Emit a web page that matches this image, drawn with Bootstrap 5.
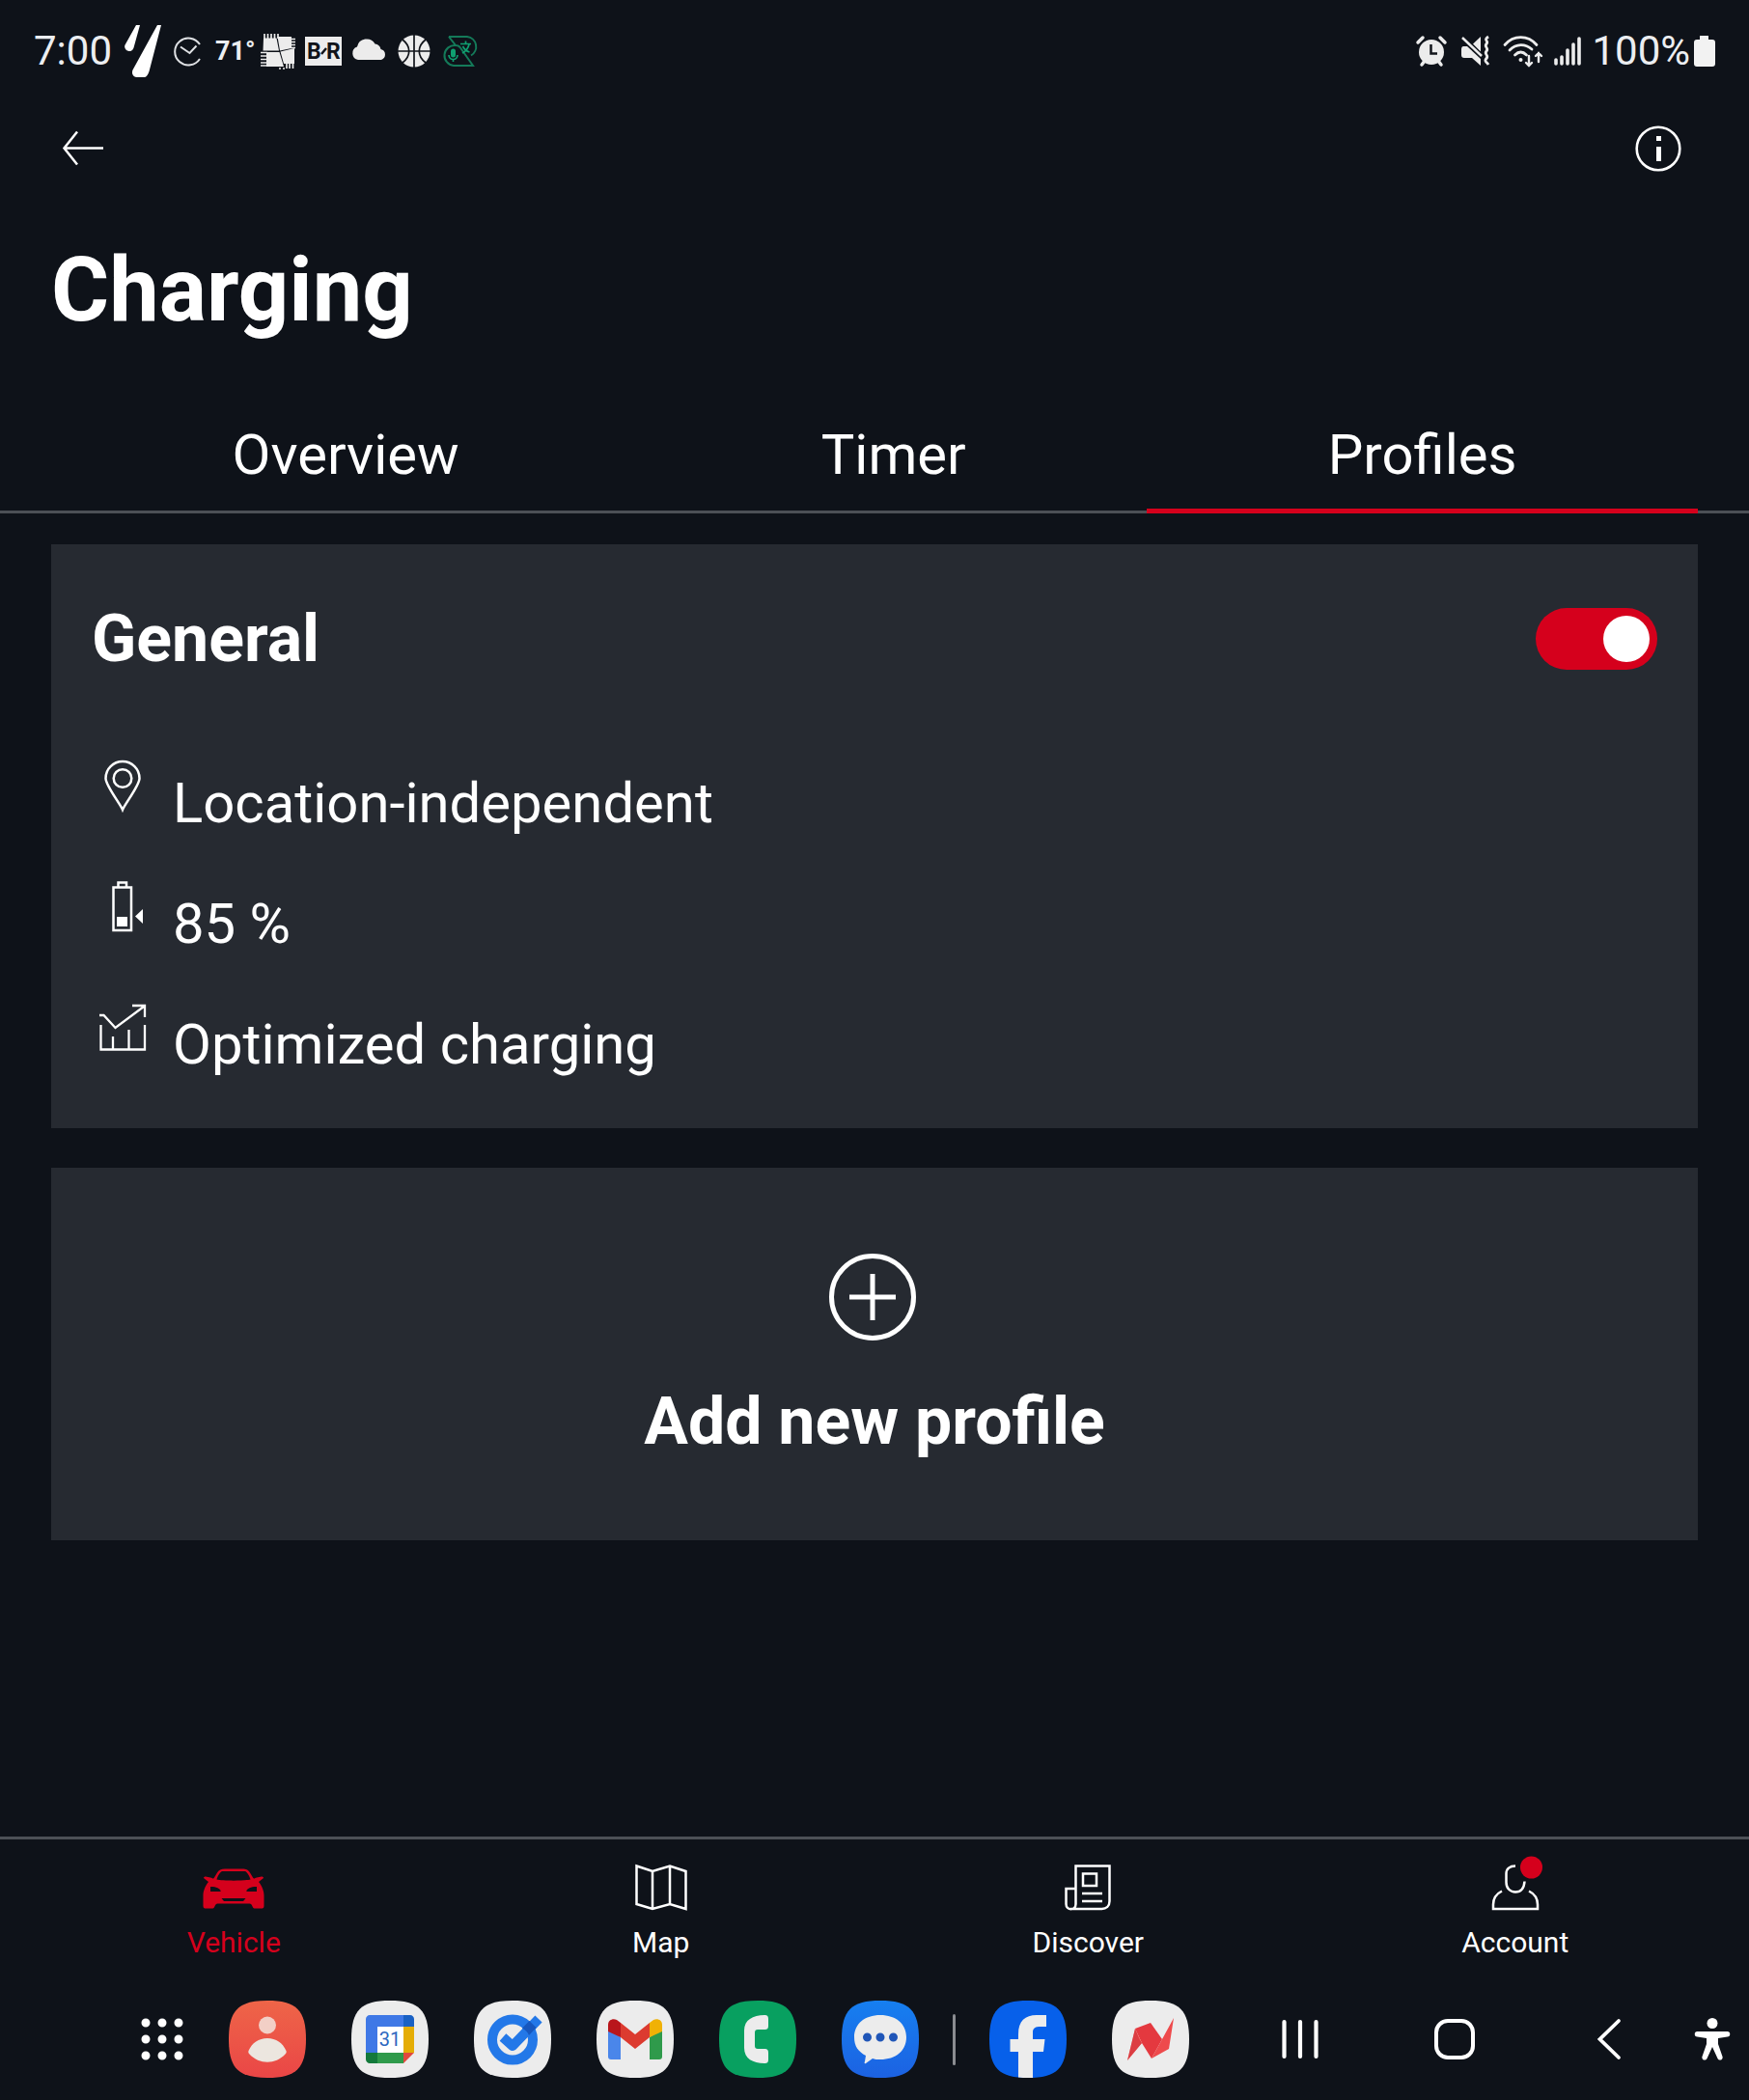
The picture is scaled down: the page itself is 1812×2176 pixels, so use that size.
<!DOCTYPE html>
<html lang="en" data-bs-theme="dark">
<head>
<meta charset="utf-8">
<meta name="viewport" content="width=device-width, initial-scale=1">
<title>Charging</title>
<link href="https://cdn.jsdelivr.net/npm/bootstrap@5.3.0/dist/css/bootstrap.min.css" rel="stylesheet">
<style>
  :root { --ink: #0e1219; --panel: #262a31; --line: #4c5056; --accent: #d5001c; }
  body { background: var(--ink); color: #fff; font-family: Roboto, "Liberation Sans", sans-serif; }
  svg { display: block; flex: none; overflow: visible; }
  a, button { color: #fff; text-decoration: none; }
  .plain-btn { background: none; border: 0; padding: 0; border-radius: 0; }
  .display-face { font-weight: 700; }

  .status-bar { height: 106px; padding: 0 35px; color: #eceef1; }
  .status-bar .figures { font-size: 42px; line-height: 48px; }
  .status-left { gap: 9px; }
  .status-left .figures { width: 84px; }
  .status-right { gap: 10px; }
  .degrees { width: 37px; font-size: 27px; line-height: 32px; font-weight: 700; white-space: nowrap; }
  .status-right .figures { margin-right: -6px; }

  .app-bar { height: 96px; padding: 0 68px 0 62px; }
  .page-title { margin: 39px 53px 49px; font-size: 92px; line-height: 120px; }

  .tab-strip { padding: 0 53px; box-shadow: inset 0 -3px 0 var(--line); }
  .tab-strip .nav-link { color: #fff; font-size: 58px; line-height: 70px; padding: 26px 0; border-radius: 0; }
  .tab-strip .nav-link.active { box-shadow: inset 0 -5px 0 var(--accent); }

  .panels { padding: 32px 53px; gap: 41px; }
  .panel { background: var(--panel); border: 0; border-radius: 0; }
  .profile-panel { padding: 56px 42px 45px; }
  .panel-title { font-size: 68px; line-height: 84px; }
  .form-check-input.profile-switch { width: 126px; height: 64px; margin: 0; border: 0; background-color: #5c6066; }
  .form-check-input.profile-switch:checked { background-color: var(--accent); }
  .facts { gap: 31px; margin-top: 76px; }
  .fact { gap: 20px; }
  .fact-text { font-size: 58px; line-height: 84px; padding-top: 10px; }
  .add-panel { padding: 89px 42px 81px; gap: 42px; }

  .bottom-nav { border-top: 3px solid var(--line); padding: 21px 21px 0; }
  .bottom-nav a { flex: 1 1 0; gap: 12px; font-size: 30px; line-height: 36px; }
  .bottom-nav a.active { color: var(--accent); }
  .task-bar { padding: 42px 16px 23px 146px; }
  .dock { gap: 47px; }
  .dock-rule { width: 3px; height: 53px; margin: 0 -12px; background: #8b8d91; border-radius: 2px; }
  .sys-keys { gap: 116px; margin-right: 63px; }
</style>
</head>
<body>
<div class="d-flex flex-column min-vh-100">

  <header>
    <div class="status-bar d-flex align-items-center justify-content-between">
      <div class="status-left d-flex align-items-center">
        <span class="figures">7:00</span>
        <svg width="39" height="54" viewBox="0 0 39 54" fill="#fff"><path d="M13 0h4l-6.500 23.500A4.700 4.700 0 0 1 1.300 21ZM35 0h4L26.500 48c-1.500 4-3 6-5 6h-8c-3.500 0-5.500-4-4-7.500Z"/></svg>
        <svg width="38" height="38" viewBox="0 0 38 38" fill="none" stroke="#dfe1e4" stroke-width="2"><path d="M31 12A14 14 0 1 0 31 27M11 14.500l9.500 6.500 7-7.500"/></svg>
        <span class="degrees">71°</span>
        <svg width="38" height="38" viewBox="0 0 38 38" fill="#ececec"><path d="M4 5.500h13.500L20 18.500H3.500ZM18.500 4H33v12l-12 2.500ZM7 20h13.500L25 35H7ZM21.500 19.500 36 16v16H25Z"/><path d="M5 1v5M8.500 1v5M12 1v5M15.500 1v5M19 1v5M32 6.500h5M32 9.500h5M32 12.500h5M32 15.500h5M1 20.500h7M1 24h7M1 27.500h7M1 31h7M1 34h7M20 37h2M24 37h2M28 31v6M31 31v6M34.500 31v6" stroke="#ececec" stroke-width="1.700"/></svg>
        <svg width="38" height="30" viewBox="0 0 38 30" font-size="23" font-weight="700"><path fill="#ececec" d="M0 0h38v30H0z"/><text x="2" y="23" fill="#11141a">B</text><text x="22" y="23" fill="#11141a">R</text><path d="m17 18 5-6" stroke="#11141a" stroke-width="2.500"/></svg>
        <svg width="38" height="38" viewBox="0 0 38 38" fill="#ececec"><path d="M8 28a7 7 0 0 1-1-13.500 10 10 0 0 1 18.500-3 7 7 0 0 1 6 5.500A5.700 5.700 0 0 1 32 28Z"/></svg>
        <svg width="38" height="38" viewBox="0 0 38 38"><circle cx="19" cy="19" r="16.500" fill="#ececec"/><path d="M19 2v34M2 19h34M7 7c9 7 9 17 0 24M31 7c-9 7-9 17 0 24" fill="none" stroke="#11141a" stroke-width="1.700"/></svg>
        <svg width="38" height="38" viewBox="0 0 38 38" fill="none" stroke="#147a59" stroke-width="2"><path d="M8 4h19a10.500 10.500 0 0 1 4 19.500M8 4l7 9A10.500 10.500 0 0 0 13 34h20L20 15.500M15 13c2 0 4 1 5 2.500"/><path d="M12.500 19v4" stroke="#0fa070" stroke-width="5" stroke-linecap="round"/><path d="M8 23c0 6 9 6 9 0M12.500 27v3M20 11.500h11M25.500 8.500v3M22 21c4-2 6-5 7-9M22.500 14c2 4 4 5 7 6" stroke="#0fa070" stroke-width="1.700"/></svg>
      </div>
      <div class="status-right d-flex align-items-center">
        <svg width="36" height="32" viewBox="0 0 36 32"><path d="m4 7 5-5M32 7l-5-5M8 30l3-4M28 30l-3-4" stroke="#ececec" stroke-width="3.500" stroke-linecap="round"/><circle cx="18" cy="17" r="13" fill="#ececec"/><path d="M17.500 9v9.500H24" fill="none" stroke="#11141a" stroke-width="2.500"/></svg>
        <svg width="36" height="32" viewBox="0 0 36 32" fill="#ececec"><path d="M15 8.500 23 1v15.500ZM5 11h4l14 13v7l-9-8H6a3 3 0 0 1-3-3v-6c0-2 1-3 2-3Z"/><path d="m4 2 20 19" stroke="#ececec" stroke-width="2.500"/><path d="M31 1c-6 4 1 4-2 7.500s3 4 0 7.500 3 4 0 7.500 0 3 2 6.500" fill="none" stroke="#ececec" stroke-width="2.800"/></svg>
        <svg width="42" height="32" viewBox="0 0 42 32" fill="none" stroke="#ececec" stroke-width="2.800" stroke-linecap="round"><path d="M2 9.500C11-1 26-1 35 9.500M7 15c7-7 16-7 23-1M12.500 20c4-4 8-4 12 0"/><circle cx="18.500" cy="25" r="2" fill="#ececec" stroke="none"/><path d="M27 21v10m-3-3 3 3 3-3M37 27V18m-3 3 3-3 3 3" stroke-width="2.400"/></svg>
        <svg width="30" height="32" viewBox="0 0 30 32" stroke="#ececec" stroke-width="3.600" stroke-linecap="round"><path d="M3 29v-4M9 29v-7M15 29V15M21 29V9M27 29V3"/></svg>
        <span class="figures">100%</span>
        <svg width="22" height="32" viewBox="0 0 22 32" fill="#f2f2f2"><path d="M6 0h9v4h4a3 3 0 0 1 3 3v22a3 3 0 0 1-3 3H3a3 3 0 0 1-3-3V7a3 3 0 0 1 3-3h3Z"/></svg>
      </div>
    </div>

    <div class="app-bar d-flex align-items-center justify-content-between">
      <button class="plain-btn" type="button" aria-label="Back"><svg width="48" height="40" viewBox="0 0 48 40" fill="none" stroke="#fff" stroke-width="2.500"><path d="M45 19.500H5M18 2.500 4.500 19.500 18 36.500"/></svg></button>
      <button class="plain-btn" type="button" aria-label="Information"><svg width="52" height="48" viewBox="0 0 52 48"><circle cx="26" cy="24" r="22.300" fill="none" stroke="#fff" stroke-width="2.600"/><path fill="#fff" d="M24 11h5v5h-5zM24 22h5v15h-5z"/></svg></button>
    </div>

    <h1 class="page-title display-face">Charging</h1>
    <ul class="nav nav-fill tab-strip">
      <li class="nav-item"><a class="nav-link" href="#overview">Overview</a></li>
      <li class="nav-item"><a class="nav-link" href="#timer">Timer</a></li>
      <li class="nav-item"><a class="nav-link active" aria-current="page" href="#profiles">Profiles</a></li>
    </ul>
  </header>

  <main class="panels d-flex flex-column">
    <section class="panel card profile-panel">
      <div class="d-flex align-items-center justify-content-between">
        <label class="panel-title display-face" for="general">General</label>
        <div class="form-switch p-0 m-0"><input class="form-check-input profile-switch d-block" type="checkbox" role="switch" id="general" checked></div>
      </div>
      <ul class="facts list-unstyled d-flex flex-column mb-0">
        <li class="fact d-flex align-items-start">
          <svg width="64" height="68" viewBox="0 0 64 68" fill="none" stroke="#fff" stroke-width="2.500"><path d="M32 59C29 52 14.500 34 14.500 26.500a17.500 17.500 0 0 1 35 0C49.500 34 35 52 32 59Z"/><circle cx="32" cy="26.500" r="9.300"/></svg>
          <span class="fact-text">Location-independent</span>
        </li>
        <li class="fact d-flex align-items-start">
          <svg width="64" height="68" viewBox="0 0 64 68" fill="none" stroke="#fff" stroke-width="2.500"><path d="M22.500 14.500H41V59H22.500zM27.500 14V9.500H36V14"/><path d="M26 45h11v10H26zM53 37v15l-8-7.500Z" fill="#fff" stroke="none"/></svg>
          <span class="fact-text">85 %</span>
        </li>
        <li class="fact d-flex align-items-start">
          <svg width="64" height="68" viewBox="0 0 64 68" fill="none" stroke="#fff" stroke-width="2.300"><path d="M9.500 32v25.500H55V32M22 57V44M38.500 57V37M8 22h4.500l12 13L54 13M42 12h13v12"/></svg>
          <span class="fact-text">Optimized charging</span>
        </li>
      </ul>
    </section>

    <button class="panel add-panel d-flex flex-column align-items-center w-100" type="button">
      <svg width="94" height="90" viewBox="0 0 94 90" fill="none" stroke="#fff" stroke-width="5"><circle cx="45" cy="45" r="42.500"/><path d="M45 21v48M21 45h48"/></svg>
      <span class="panel-title display-face">Add new profile</span>
    </button>
  </main>

  <footer class="mt-auto">
    <nav class="bottom-nav d-flex">
      <a class="active d-flex flex-column align-items-center" href="#vehicle" aria-current="page">
        <svg width="64" height="56" viewBox="0 0 64 56"><path fill="#d5001c" fill-rule="evenodd" d="M1 19c0-1 1-1.500 2-1.500l5 1c2 .500 3 2 4 0l3-5c1.500-2.500 4-4 8-4h18c4 0 6.500 1.500 8 4l3 5c1 2 2 .500 4 0l5-1c1 0 2 .500 2 1.500L58 23c4 5 5.500 10 5.500 14v11c0 2-1 2.500-3 2.500h-7c-2 0-2-5-5-5h-33c-3 0-3 5-5 5h-7c-2 0-3-.500-3-2.500V37c0-4 1.500-9 5.500-14ZM20 12c-2 .500-5 6-5.500 8.500C20 22 44 22 49.500 20.500 49 18 46 12.500 44 12ZM8 28v5h10.500c1-3-6-5.500-10.500-5ZM56 28c-4.500-.500-11.500 2-10.500 5H56ZM19.500 40l2.500 3h20l2.500-3Z"/></svg>
        <span>Vehicle</span>
      </a>
      <a class="d-flex flex-column align-items-center" href="#map">
        <svg width="64" height="56" viewBox="0 0 64 56" fill="none" stroke="#fff" stroke-width="2.500"><path d="M6.500 6.500 23 12l18-5.500L57.500 12v39L41 46l-18 5L6.500 46ZM23 12v39M41 6.500V46"/></svg>
        <span>Map</span>
      </a>
      <a class="d-flex flex-column align-items-center" href="#discover">
        <svg width="64" height="56" viewBox="0 0 64 56" fill="none" stroke="#fff" stroke-width="2.500"><path d="M19.500 45V6.500h35V43c0 5-3.500 8-8 8H14M19.500 30H9.500v16c0 7 10 7 10 0V30M27 14.500h14V27H27zM26 35h21M26 43h21"/></svg>
        <span>Discover</span>
      </a>
      <a class="d-flex flex-column align-items-center" href="#account">
        <svg width="64" height="56" viewBox="0 0 64 56" fill="none" stroke="#fff" stroke-width="2.500"><path d="M32 6.500c-6 0-9.500 3-9.500 8v9c0 6 4 10 9.500 10s9-4 9.500-11M18 32.500c-6 3-9 8-9 14V51h46v-4.500c0-6-3-11-9-14"/><circle cx="48.500" cy="8" r="11.500" fill="#d5001c" stroke="none"/></svg>
        <span>Account</span>
      </a>
    </nav>

    <div class="task-bar d-flex align-items-center">
      <div class="dock d-flex align-items-center">
        <button class="plain-btn" type="button" aria-label="All apps"><svg width="44" height="44" viewBox="0 0 44 44" stroke="#fff" stroke-width="9" stroke-linecap="round"><path d="M5 5h0M22 5h0M39 5h0M5 22h0M22 22h0M39 22h0M5 39h0M22 39h0M39 39h0"/></svg></button>
        <button class="plain-btn" type="button" aria-label="Contacts"><svg width="80" height="80" viewBox="0 0 80 80"><defs><linearGradient id="coral" x2="0" y2="1"><stop stop-color="#ee6548"/><stop offset="1" stop-color="#ea4646"/></linearGradient><linearGradient id="azure" x2="0" y2="1"><stop stop-color="#167ff0"/><stop offset="1" stop-color="#1c62e2"/></linearGradient></defs><path fill="url(#coral)" d="M40 0C70 0 80 10 80 40S70 80 40 80 0 70 0 40 10 0 40 0Z"/><circle cx="40" cy="25.500" r="9" fill="#f2cfc6"/><path fill="#ece6df" d="M40 39c9 0 16 5 19.500 13 .500 1.500 0 2.500-1 3.500-10 11-27 11-37 0-1-1-1.500-2-1-3.500C24 44 31 39 40 39Z"/></svg></button>
        <button class="plain-btn" type="button" aria-label="Calendar"><svg width="80" height="80" viewBox="0 0 80 80"><path fill="#ececec" d="M40 0C70 0 80 10 80 40S70 80 40 80 0 70 0 40 10 0 40 0Z"/><path fill="#fff" d="M26 26h28v28H26z"/><path fill="#3f78e6" d="M19 15h35v12H27v27H15V19c0-2 2-4 4-4Z"/><path fill="#1a61c4" d="M54 15h7c2 0 4 2 4 4v8H54Z"/><path fill="#e5ad06" d="M54 27h11v27H54Z"/><path fill="#2f9a4b" d="M27 54h27v11H27Z"/><path fill="#13793b" d="M15 54h12v11h-8c-2 0-4-2-4-4Z"/><path fill="#e2483d" d="M54 54h11L54 65Z"/><text x="40" y="47" text-anchor="middle" font-size="20" fill="#2c68c0">31</text></svg></button>
        <button class="plain-btn" type="button" aria-label="Tasks"><svg width="80" height="80" viewBox="0 0 80 80"><path fill="#ececec" d="M40 0C70 0 80 10 80 40S70 80 40 80 0 70 0 40 10 0 40 0Z"/><circle cx="40" cy="40.500" r="21" fill="none" stroke="#2378e8" stroke-width="10"/><path d="M30 38l10 9 27-28" fill="none" stroke="#2378e8" stroke-width="10" stroke-linejoin="round"/><path fill="#1757be" d="M50 28.500 57.500 21l7 7-7.500 8c-1-3-4-6-7-7.500Z"/></svg></button>
        <button class="plain-btn" type="button" aria-label="Gmail"><svg width="80" height="80" viewBox="0 0 80 80"><path fill="#ececec" d="M40 0C70 0 80 10 80 40S70 80 40 80 0 70 0 40 10 0 40 0Z"/><path fill="#4a86ea" d="M12 29l13 9v23H15c-2 0-3-1-3-3Z"/><path fill="#2f9a4b" d="M68 29l-13 9v23h10c2 0 3-1 3-3Z"/><path fill="#dc3b30" d="M25 23l15 12 15-12v15L40 50 25 38Z"/><path fill="#b9161b" d="M12 32v-7c0-5 5-7 9-5l4 3v15Z"/><path fill="#f0b106" d="M68 32v-7c0-5-5-7-9-5l-4 3v15Z"/></svg></button>
        <button class="plain-btn" type="button" aria-label="Phone"><svg width="80" height="80" viewBox="0 0 80 80"><path fill="#08a060" d="M40 0C70 0 80 10 80 40S70 80 40 80 0 70 0 40 10 0 40 0Z"/><path fill="#ececec" d="M47 15c3 0 4 1 4 4v7c0 3-1 4-4 4h-7c-2 0-3 1-3 3v14c0 2 1 3 3 3h7c3 0 4 1 4 4v7c0 3-1 4-4 4-12 0-21-5-21-16V31c0-11 9-16 21-16Z"/></svg></button>
        <button class="plain-btn" type="button" aria-label="Messages"><svg width="80" height="80" viewBox="0 0 80 80"><path fill="url(#azure)" d="M40 0C70 0 80 10 80 40S70 80 40 80 0 70 0 40 10 0 40 0Z"/><path fill="#ececec" d="M40 15c16 0 27 9 27 23S56 61 40 61c-3 0-6 0-8-1l-7 5c-1 .500-2 0-1-2l1-6c-8-4-12-10-12-19 0-14 11-23 27-23Z"/><path d="M26.500 38h0M40 38h0M53.500 38h0" stroke="#2056b8" stroke-width="9" stroke-linecap="round"/></svg></button>
        <span class="dock-rule"></span>
        <button class="plain-btn" type="button" aria-label="Facebook"><svg width="80" height="80" viewBox="0 0 80 80"><path fill="#0760ea" d="M40 0C70 0 80 10 80 40S70 80 40 80 0 70 0 40 10 0 40 0Z"/><path fill="#ececec" d="M30 79.500V53h-8.500V40H30v-5c0-14 7-20 19-20h10v12h-6c-5 0-8 1-8 6v7h12.500L56 53H45v27c-5 .200-10 .200-15-.500Z"/></svg></button>
        <button class="plain-btn" type="button" aria-label="News"><svg width="80" height="80" viewBox="0 0 80 80"><path fill="#ececec" d="M40 0C70 0 80 10 80 40S70 80 40 80 0 70 0 40 10 0 40 0Z"/><path fill="#e4393f" d="M24 29 40 23l12 17L41 60 31 44Z"/><path fill="#ee4a4c" d="m24 29 7 15-15 18ZM52 40l12-22-5 32-18 10Z"/><path fill="#c92f37" d="m24 29 4 11 3 4-15 18Z" opacity=".5"/></svg></button>
      </div>
      <div class="sys-keys d-flex align-items-center ms-auto">
        <button class="plain-btn" type="button" aria-label="Recent apps"><svg width="44" height="44" viewBox="0 0 44 44" stroke="#fff" stroke-width="4.200" stroke-linecap="round"><path d="M5.500 4v36M22 4v36M38.500 4v36"/></svg></button>
        <button class="plain-btn" type="button" aria-label="Home"><svg width="44" height="44" viewBox="0 0 44 44" fill="none" stroke="#fff" stroke-width="4"><rect x="3" y="3" width="38" height="38" rx="12"/></svg></button>
        <button class="plain-btn" type="button" aria-label="System back"><svg width="44" height="44" viewBox="0 0 44 44" fill="none" stroke="#fff" stroke-width="3.800" stroke-linecap="round"><path d="M32 3 12.500 22 32 41"/></svg></button>
      </div>
      <button class="plain-btn" type="button" aria-label="Accessibility"><svg width="44" height="44" viewBox="0 0 44 44" fill="#fff"><circle cx="22" cy="5.500" r="5.500"/><path d="M6.500 14h31a2.500 2.500 0 0 1 0 5.500L28 21v6l4.500 13c1 3.500-3.500 5-5 2L22 30l-5.500 12c-1.500 3-6 1.500-5-2L16 27v-6l-9.500-1.500a2.500 2.500 0 0 1 0-5.500Z"/></svg></button>
    </div>
  </footer>
</div>
<script src="https://cdn.jsdelivr.net/npm/bootstrap@5.3.0/dist/js/bootstrap.bundle.min.js"></script>
</body>
</html>
